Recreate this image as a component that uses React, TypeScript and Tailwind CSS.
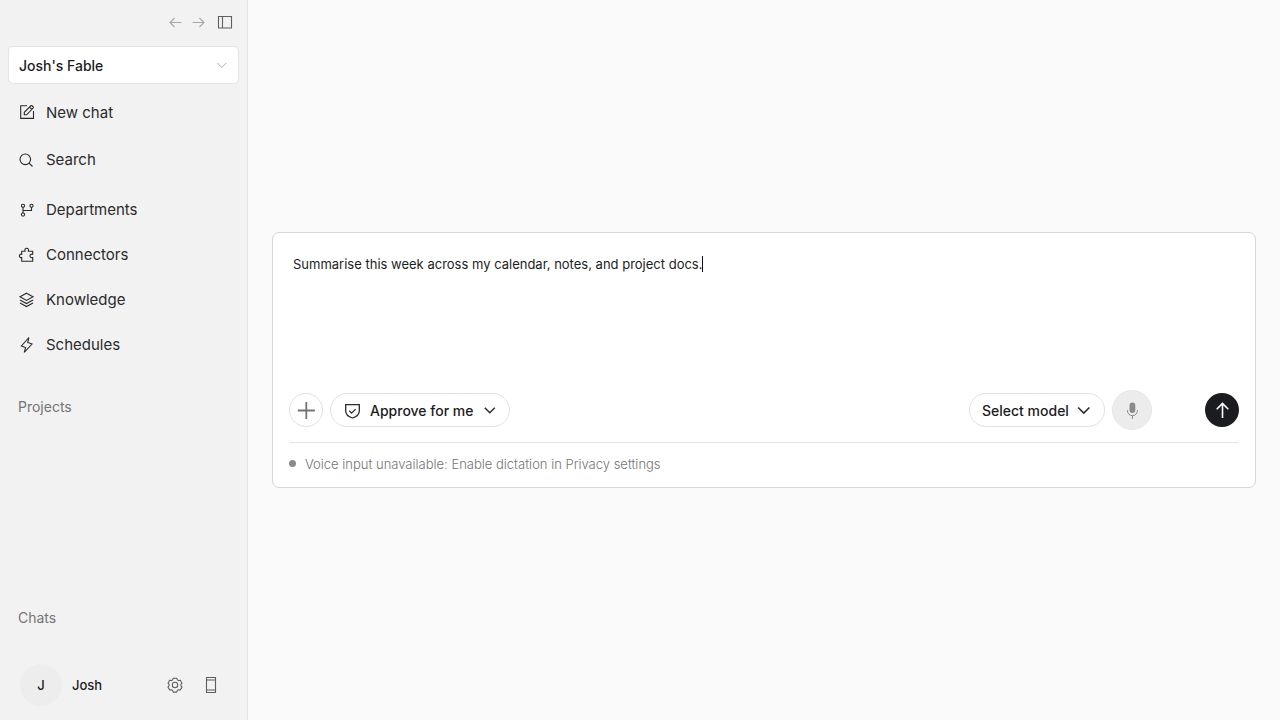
import { useState } from "react";
import type { ReactNode } from "react";

const topNav = [
  { label: "New chat", icon: <ComposeIcon /> },
  { label: "Search", icon: <SearchIcon /> },
];

const mainNav = [
  { label: "Departments", icon: <BranchIcon /> },
  { label: "Connectors", icon: <PuzzleIcon /> },
  { label: "Knowledge", icon: <LayersIcon /> },
  { label: "Schedules", icon: <BoltIcon /> },
];

export default function App() {
  return (
    <div className="flex min-h-screen bg-[#fafafa] font-['Inter',sans-serif] text-[#1c1c1e]">
      <Sidebar />
      <main className="flex min-w-0 flex-1 flex-col justify-center px-6">
        <Composer />
      </main>
    </div>
  );
}

function Sidebar() {
  return (
    <aside className="flex w-[248px] shrink-0 flex-col border-r border-[#e4e4e4] bg-[#f2f2f2]">
      {/* Window controls */}
      <div className="flex h-[46px] items-center justify-end gap-[7px] pr-[14px] pb-[2px]">
        <button aria-label="Back" className="text-[#a8a8a8]">
          <Icon>
            <path d="M14.500 8.500H3M7.500 4l-4.500 4.500 4.500 4.500" />
          </Icon>
        </button>
        <button aria-label="Forward" className="text-[#a8a8a8]">
          <Icon>
            <path d="M2.500 8.500H14M9.500 4l4.500 4.500-4.500 4.500" />
          </Icon>
        </button>
        <button aria-label="Toggle sidebar" className="ml-1 text-[#5f5f5f]">
          <Icon>
            <path d="M1.500 2.500h13v11.500h-13zM5.500 2.500v11.500" />
          </Icon>
        </button>
      </div>

      <div className="relative mr-2 ml-2">
        <label htmlFor="workspace" className="sr-only">
          Workspace
        </label>
        <select
          id="workspace"
          className="h-[38px] w-full appearance-none rounded-[5px] border border-[#e4e4e4] bg-white pt-[2px] pr-8 pl-[10px] text-sm leading-6 font-medium"
        >
          <option>Josh's Fable</option>
        </select>
        <Chevron className="right-[10px] h-[14px] w-[14px] text-[#a0a0a0]" />
      </div>

      <nav className="mt-[6px] flex flex-col gap-[5px]">
        <div className="flex flex-col gap-[2px]">
          {topNav.map((item) => (
            <NavItem key={item.label} {...item} />
          ))}
        </div>
        <div className="flex flex-col">
          {mainNav.map((item) => (
            <NavItem key={item.label} {...item} />
          ))}
        </div>
      </nav>

      <section className="mt-[30px] flex-1 px-[18px]">
        <h2 className="text-sm text-[#757575]">Projects</h2>
      </section>
      <section className="px-[18px]">
        <h2 className="text-sm text-[#757575]">Chats</h2>
      </section>

      {/* Account */}
      <div className="mt-9 mb-[14px] flex items-center pr-[28px] pl-5">
        <div className="grid h-[42px] w-[42px] place-items-center rounded-full bg-[#ededed] pt-[2px] text-[13px] font-medium">
          J
        </div>
        <span className="ml-[10px] flex-1 pt-[2px] text-[13px] font-medium">Josh</span>
        <button aria-label="Settings" className="text-[#5f5f5f]">
          <GearIcon />
        </button>
        <button aria-label="Connect phone" className="ml-5 text-[#5f5f5f]">
          <Icon>
            <path d="M3.500.500h9v15h-9zM3.500 3h9M3.500 13h9" />
          </Icon>
        </button>
      </div>
    </aside>
  );
}

function NavItem({ label, icon }: { label: string; icon: ReactNode }) {
  return (
    <a href="#" className="flex h-[45px] items-center gap-[11px] pl-[19px] text-[15px] leading-6 text-[#2b2b2b]">
      <span className="mb-px">{icon}</span>
      <span>{label}</span>
    </a>
  );
}

function Composer() {
  const [prompt, setPrompt] = useState("Summarise this week across my calendar, notes, and project docs.");

  return (
    <form className="rounded-[7px] border border-[#d6d6d6] bg-white px-4" onSubmit={(e) => e.preventDefault()}>
      <div className="flex min-h-[157px] items-start px-1 pt-[21px]">
        <textarea
          aria-label="Message"
          rows={1}
          value={prompt}
          onChange={(e) => setPrompt(e.target.value)}
          className="field-sizing-content resize-none text-[13px] leading-5 caret-transparent outline-none"
        />
        <span className="mt-[2px] h-4 w-px bg-[#111111]" />
      </div>

      <div className="flex h-10 items-center">
        <button
          type="button"
          aria-label="Add attachment"
          className="grid h-[34px] w-[34px] place-items-center rounded-full border border-[#e2e2e2] text-[#747474]"
        >
          <svg width="18" height="18" viewBox="0 0 18 18" fill="none" stroke="currentColor" strokeWidth="1.8">
            <path d="M9.300 1v17M.8 9.500h17" />
          </svg>
        </button>

        <div className="relative ml-[7px]">
          <ShieldIcon />
          <label htmlFor="approval" className="sr-only">
            Approval mode
          </label>
          <select
            id="approval"
            className="h-[34px] w-[180px] appearance-none rounded-full border border-[#e2e2e2] bg-transparent pt-[2px] pr-8 pl-[39px] text-sm leading-6 font-medium"
          >
            <option>Approve for me</option>
          </select>
          <Chevron className="right-3 h-4 w-4 stroke-[1.4] text-[#2b2b2b]" />
        </div>

        <div className="relative ml-auto">
          <label htmlFor="model" className="sr-only">
            Model
          </label>
          <select
            id="model"
            className="h-[34px] w-[136px] appearance-none rounded-full border border-[#e2e2e2] bg-transparent pt-[2px] pr-8 pl-3 text-sm leading-6 font-medium"
          >
            <option>Select model</option>
          </select>
          <Chevron className="right-3 h-[18px] w-[18px] stroke-[1.4] text-[#2b2b2b]" />
        </div>

        <button
          type="button"
          aria-label="Voice input"
          className="ml-[7px] grid h-10 w-10 place-items-center rounded-full border border-[#e8e8e8] bg-[#ececec] text-[#8a8a8a]"
        >
          <MicIcon />
        </button>

        <button
          type="submit"
          aria-label="Send"
          className="ml-[53px] grid h-[34px] w-[34px] place-items-center rounded-full bg-[#1b1c20] text-white"
        >
          <svg width="18" height="18" viewBox="0 0 18 18" fill="none" stroke="currentColor" strokeWidth="1.6">
            <path d="M9.500 17V2.500M3.700 8.300l5.800-5.800 5.800 5.800" />
          </svg>
        </button>
      </div>

      <div className="mt-3 flex h-[45px] items-center gap-[9px] border-t border-[#e4e4e4] pb-[3px]">
        <span className="h-[7px] w-[7px] rounded-full bg-[#8a8a8a]" />
        <p className="text-[13px] leading-5 font-light text-[#747474]">
          Voice input unavailable: Enable dictation in Privacy settings
        </p>
      </div>
    </form>
  );
}

/* Icons */

function Icon({ children }: { children: ReactNode }) {
  return (
    <svg className="shrink-0 overflow-visible" width="16" height="16" viewBox="0 0 16 16" fill="none" stroke="currentColor" strokeWidth="1.1">
      {children}
    </svg>
  );
}

function Chevron({ className }: { className: string }) {
  return (
    <svg
      className={`pointer-events-none absolute top-1/2 -translate-y-1/2 ${className}`}
      viewBox="0 0 16 16"
      fill="none"
      stroke="currentColor"
    >
      <path d="M2.800 5.800l5 5 5-5" />
    </svg>
  );
}

function ComposeIcon() {
  return (
    <Icon>
      <path d="M8 1.700H1.700v12.700h12.800V7" />
      <path d="M5.300 10.800V8.300l6.700-6.700h.900l1.400 1.400v.900L7.700 10.800zM10.500 3.100l2.300 2.300" />
    </Icon>
  );
}

function SearchIcon() {
  return (
    <Icon>
      <circle cx="6.300" cy="8.300" r="5.300" />
      <path d="M10.100 12.100l3.400 3.400" />
    </Icon>
  );
}

function BranchIcon() {
  return (
    <Icon>
      <circle cx="4" cy="4.800" r="1.600" />
      <circle cx="12.500" cy="4.800" r="1.600" />
      <circle cx="4" cy="13.600" r="1.600" />
      <path d="M4 6.400v5.600M12.500 6.400v3.100H4" />
    </Icon>
  );
}

function PuzzleIcon() {
  return (
    <Icon>
      <path d="M2.700 5.300h3.400c-.6-1.900.2-3 1.600-3s2.200 1.100 1.600 3h4.400v3c-1.800-.5-2.700.4-2.700 1.600s.9 2.100 2.700 1.600v3.700H2.700v-3.600C1.300 11.800.400 11 .400 9.900s.9-2 2.300-1.700z" />
    </Icon>
  );
}

function LayersIcon() {
  return (
    <Icon>
      <path d="M7.500 2.200l6.500 3.600-6.500 3.600L1 5.800zM1 8.900l6.500 3.600L14 8.900M1 12l6.500 3.600L14 12" />
    </Icon>
  );
}

function BoltIcon() {
  return (
    <Icon>
      <path d="M9.900 1.500L2.400 10l4.200 1.600-1.400 4.900L13 8.100 8.700 6.500z" />
    </Icon>
  );
}

function GearIcon() {
  return (
    <Icon>
      <circle cx="8" cy="8" r="2.700" />
      <path
        d="M6.300 1.200h3.400l.7 1.700 1 .6 1.900-.2 1.700 2.900L13.900 7.400v1.200l1.100 1.500-1.700 2.900-1.900-.2-1 .6-.7 1.700H6.300l-.7-1.700-1-.6-1.900.2L1 10.100l1.100-1.500V7.400L1 6.200l1.700-2.900 1.900.2 1-.6z"
        strokeLinejoin="round"
      />
    </Icon>
  );
}

function ShieldIcon() {
  return (
    <svg
      className="pointer-events-none absolute top-[10px] left-[14px] text-[#2b2b2b]"
      width="16"
      height="16"
      viewBox="0 0 16 16"
      fill="none"
      stroke="currentColor"
      strokeWidth="1.3"
    >
      <path d="M1.700 1.700h13.600v6.200c0 3.500-3 5.800-6.800 7.100-3.900-1.300-6.800-3.600-6.800-7.100z" />
      <path d="M5.300 7.800l2.300 2.300 4-4" />
    </svg>
  );
}

function MicIcon() {
  return (
    <svg width="18" height="18" viewBox="0 0 18 18" fill="none" stroke="currentColor">
      <rect x="6.500" y="1.500" width="5.800" height="10.500" rx="2.900" fill="currentColor" stroke="none" />
      <path d="M4.400 9v.7a5 5 0 0 0 10 0V9M9.400 14.700V18" />
    </svg>
  );
}
